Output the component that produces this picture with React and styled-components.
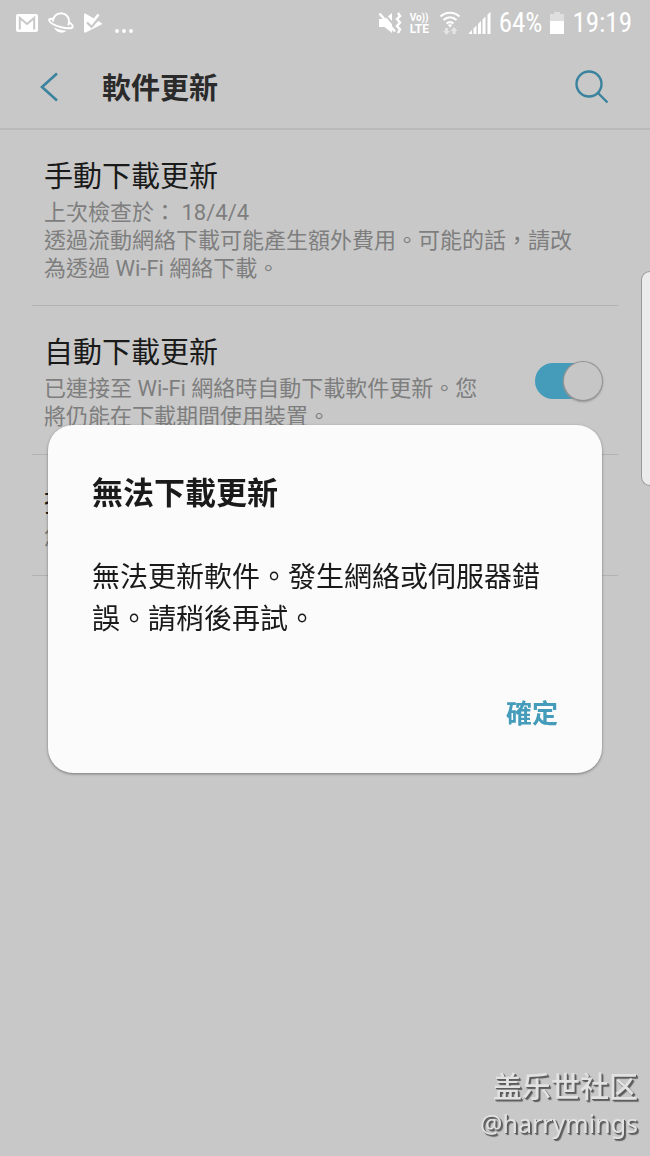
import React, { useState } from 'react';
import styled, { createGlobalStyle } from 'styled-components';

const GlobalStyle = createGlobalStyle`
  * {
    box-sizing: border-box;
  }
  body {
    margin: 0;
    background: #c8c8c8;
    color: #1a1a1a;
    font-family: Roboto, "Noto Sans CJK TC", sans-serif;
  }
  h1, h2, h3, p {
    margin: 0;
  }
  button {
    padding: 0;
    border: none;
    background: none;
    font-family: inherit;
    cursor: pointer;
  }
`;

const settings = [
  {
    id: 'manual',
    title: '手動下載更新',
    lines: ['上次檢查於： 18/4/4', '透過流動網絡下載可能產生額外費用。可能的話，請改為透過 Wi-Fi 網絡下載。'],
  },
  {
    id: 'auto',
    title: '自動下載更新',
    lines: ['已連接至 Wi-Fi 網絡時自動下載軟件更新。您將仍能在下載期間使用裝置。'],
    toggle: true,
  },
  {
    id: 'schedule',
    title: '排程軟件更新',
    lines: ['您可預先設定安裝更新的時間。'],
  },
];

function StatusIcons() {
  return (
    <Group $gap={10}>
      <svg width="22" height="18" viewBox="0 0 22 18">
        <rect width="22" height="18" rx="2" fill="#fff" />
        <path d="M3.800 15.500V4L11 10l7.200-6v11.500" fill="none" stroke="#c8c8c8" strokeWidth="2" />
      </svg>
      <svg width="26" height="22" viewBox="0 0 26 22">
        <path d="M5 9.500C5 4.500 8.500 1.200 13 1.200s8 3.300 8 8.300c0 1.500-.3 2.700-.8 3.800" fill="none" stroke="#fff" strokeWidth="2" />
        <path d="M5 7C1.500 6.500.8 7.500 1.200 8.500c1 2.700 6.500 5.300 12 6.700 6 1.500 11 1.500 11.500-.5.3-1.300-1.500-3-4-4.700" fill="none" stroke="#fff" strokeWidth="2" />
        <path d="M6 15.500c2.500 1.500 7.500 3 12.500 3.200-3.500 3.300-10 2.600-12.500-3.200z" fill="#fff" />
      </svg>
      <svg width="20" height="20" viewBox="0 0 20 20">
        <path d="M0 1.500C0 .5 1 .2 1.800.7L17.500 10c.8.500.8 1.200 0 1.600L1.800 19.500c-.8.500-1.800 0-1.800-1z" fill="#fff" />
        <path d="M3.500 9l4 3.800L15.500 3.500" fill="none" stroke="#c8c8c8" strokeWidth="3.600" />
        <path d="M4.500 7.500l3 3L14.500 1.500" fill="none" stroke="#fff" strokeWidth="2.600" />
      </svg>
      <svg width="20" height="20" viewBox="0 0 20 20">
        <circle cx="3" cy="18" r="1.900" fill="#fff" />
        <circle cx="10" cy="18" r="1.900" fill="#fff" />
        <circle cx="17" cy="18" r="1.900" fill="#fff" />
      </svg>
    </Group>
  );
}

function SystemIcons() {
  return (
    <Group $gap={8}>
      <svg width="24" height="22" viewBox="0 0 24 22">
        <path d="M1 7h5.500L14 1v20l-7.500-6H1z" fill="#fff" />
        <path d="M4 -1l15 17.500" stroke="#c8c8c8" strokeWidth="2" />
        <path d="M1.500 1.500L17 19.500" stroke="#fff" strokeWidth="2.600" />
        <path d="M20 1l2 3-3 3 3 3.500-3 3.500 3 3.500-2 3.500" fill="none" stroke="#fff" strokeWidth="2.400" />
      </svg>
      <VoLte>
        <small>Vo))</small>
        <b>LTE</b>
      </VoLte>
      <svg width="22" height="24" viewBox="3 0 22 24">
        <g fill="none" stroke="#fff" strokeWidth="2.200">
          <path d="M4.500 5.500c5.500-5 13.500-5 19 0" />
          <path d="M7.500 9c4-3.500 9-3.500 13 0" />
          <path d="M10.500 12.500c2.200-1.700 4.800-1.700 7 0" />
        </g>
        <path d="M11.800 14c1.300-1 3.100-1 4.400 0L14 16.500z" fill="#fff" />
        <path d="M9 17h3v3h2l-3.500 4L7 20h2zM16.500 23v-3h-2l3.500-4 3.500 4h-2v3z" fill="#e4e4e4" />
      </svg>
      <svg width="22" height="22" viewBox="0 0 22 22">
        <path d="M0 22v-1l3-3v4zM4.500 22v-5.500l3-3V22zM9 22V12l3-3v13zM13.500 22V7.500l3-3V22zM18.500 22V2.500L21.500 0v22z" fill="#fff" />
      </svg>
      <StatusText>64%</StatusText>
      <svg width="14" height="22" viewBox="0 0 14 22">
        <path d="M0 2h4V0h6v2h4v7H0z" fill="#dedede" />
        <path d="M0 9h14v13H0z" fill="#fff" />
      </svg>
      <StatusText>19:19</StatusText>
    </Group>
  );
}

export default function App() {
  const [autoUpdate, setAutoUpdate] = useState(true);
  const [open, setOpen] = useState(true);

  return (
    <>
      <GlobalStyle />
      <Page lang="zh-Hant">
        <StatusBar>
          <StatusIcons />
          <SystemIcons />
        </StatusBar>
        <Header>
          <IconButton aria-label="返回">
            <svg width="20" height="30" viewBox="0 0 20 30" fill="none" stroke="#3a829e" strokeWidth="2.600">
              <path d="M19 1.500L4 15l15 13.500" />
            </svg>
          </IconButton>
          <Title>軟件更新</Title>
          <IconButton aria-label="搜尋">
            <svg width="34" height="34" viewBox="0 0 34 34" fill="none" stroke="#3a829e" strokeWidth="2.400">
              <circle cx="14" cy="14" r="12.500" />
              <path d="M22.500 22.500L32.500 32.500" />
            </svg>
          </IconButton>
        </Header>
        <List>
          {settings.map((item) => (
            <Row key={item.id}>
              <RowText>
                <RowTitle as={item.toggle ? 'label' : 'h2'} htmlFor={item.toggle ? item.id : undefined}>
                  {item.title}
                </RowTitle>
                {item.lines.map((line) => (
                  <RowNote key={line}>{line}</RowNote>
                ))}
              </RowText>
              {item.toggle && (
                <Switch
                  id={item.id}
                  type="checkbox"
                  checked={autoUpdate}
                  onChange={(e) => setAutoUpdate(e.target.checked)}
                />
              )}
            </Row>
          ))}
        </List>
      </Page>
      <EdgeHandle />
      {open && (
        <Overlay lang="zh-Hant">
          <Dialog role="dialog" aria-labelledby="dialog-title">
            <DialogTitle id="dialog-title">無法下載更新</DialogTitle>
            <DialogBody>無法更新軟件。發生網絡或伺服器錯誤。請稍後再試。</DialogBody>
            <Actions>
              <ConfirmButton onClick={() => setOpen(false)}>確定</ConfirmButton>
            </Actions>
          </Dialog>
        </Overlay>
      )}
      <Watermark lang="zh-Hans">
        <Community>盖乐世社区</Community>
        <Author>@harrymings</Author>
      </Watermark>
    </>
  );
}

const Page = styled.main`
  min-height: 100vh;
`;

const StatusBar = styled.div`
  display: flex;
  align-items: center;
  justify-content: space-between;
  height: 46px;
  padding: 0 18px 0 16px;
`;

const Group = styled.div`
  display: flex;
  align-items: center;
  gap: ${(p) => p.$gap}px;
`;

const StatusText = styled.span`
  color: #fff;
  font-family: "Roboto Condensed", Roboto, sans-serif;
  font-size: 27px;
  line-height: 28px;
`;

const VoLte = styled.span`
  display: flex;
  flex-direction: column;
  width: 21px;
  color: #fff;
  small {
    font-size: 10px;
    line-height: 11px;
    font-weight: 700;
  }
  b {
    font-size: 12px;
    line-height: 12px;
  }
`;

const Header = styled.header`
  display: flex;
  align-items: center;
  height: 84px;
  padding: 0 41px 0 38px;
  border-bottom: 2px solid #bababa;
`;

const IconButton = styled.button`
  display: flex;
`;

const Title = styled.h1`
  flex: 1;
  padding: 4px 0 0 44px;
  color: #2b2b2b;
  font-size: 29px;
  line-height: 38px;
  font-weight: 700;
`;

const List = styled.section`
  padding: 0 32px;
`;

const Row = styled.div`
  display: flex;
  align-items: center;
  gap: 32px;
  padding: 28px 16px 23px 12px;
  border-bottom: 1px solid #b2b2b2;
  &:first-child {
    padding-bottom: 22px;
  }
`;

const RowText = styled.div`
  flex: 1;
  padding-right: 12px;
`;

const RowTitle = styled.h2`
  display: block;
  margin-bottom: 3px;
  font-size: 29px;
  line-height: 38px;
  font-weight: 400;
`;

const RowNote = styled.p`
  color: #7e7e7e;
  font-size: 22px;
  line-height: 28px;
`;

const Switch = styled.input`
  appearance: none;
  display: flex;
  align-items: center;
  justify-content: flex-end;
  width: 67px;
  height: 36px;
  margin: 0 0 4px;
  border-radius: 18px;
  background: #459bba;
  cursor: pointer;
  &::before {
    content: "";
    flex: none;
    width: 38px;
    height: 38px;
    border-radius: 50%;
    background: #c6c6c6;
    box-shadow: 0 0 0 1px #949494, 0 1px 2px 1px #949494;
  }
  &:not(:checked) {
    justify-content: flex-start;
    background: #a0a0a0;
  }
`;

const EdgeHandle = styled.div`
  position: fixed;
  top: 271px;
  right: 0;
  width: 9px;
  height: 215px;
  border: 1px solid #999;
  border-right: none;
  border-radius: 10px 0 0 10px;
  background: #ebebeb;
`;

const Overlay = styled.div`
  position: fixed;
  inset: 0;
  display: flex;
  align-items: center;
  padding: 42px 48px 0;
`;

const Dialog = styled.section`
  flex: 1;
  padding: 48px 44px 39px;
  border-radius: 25px;
  background: #fbfbfb;
  box-shadow: 0 1px 3px rgba(0, 0, 0, 0.4);
`;

const DialogTitle = styled.h2`
  margin-bottom: 42px;
  font-size: 31px;
  line-height: 42px;
  font-weight: 700;
`;

const DialogBody = styled.p`
  margin-bottom: 53px;
  font-size: 28px;
  line-height: 42px;
`;

const Actions = styled.div`
  display: flex;
  justify-content: flex-end;
`;

const ConfirmButton = styled.button`
  color: #459bba;
  font-size: 26px;
  line-height: 40px;
  font-weight: 700;
`;

const Watermark = styled.footer`
  position: fixed;
  right: 12px;
  bottom: 14px;
  display: flex;
  flex-direction: column;
  align-items: flex-end;
  color: #e2e2e2;
  text-shadow: 1px 1px 0 #5c5c5c, 2px 2px 1px #5c5c5c;
`;

const Community = styled.span`
  font-family: "Noto Sans CJK SC", sans-serif;
  font-size: 29px;
  line-height: 38px;
  font-weight: 500;
`;

const Author = styled.span`
  font-family: "Noto Sans", sans-serif;
  font-size: 25px;
  line-height: 38px;
`;
